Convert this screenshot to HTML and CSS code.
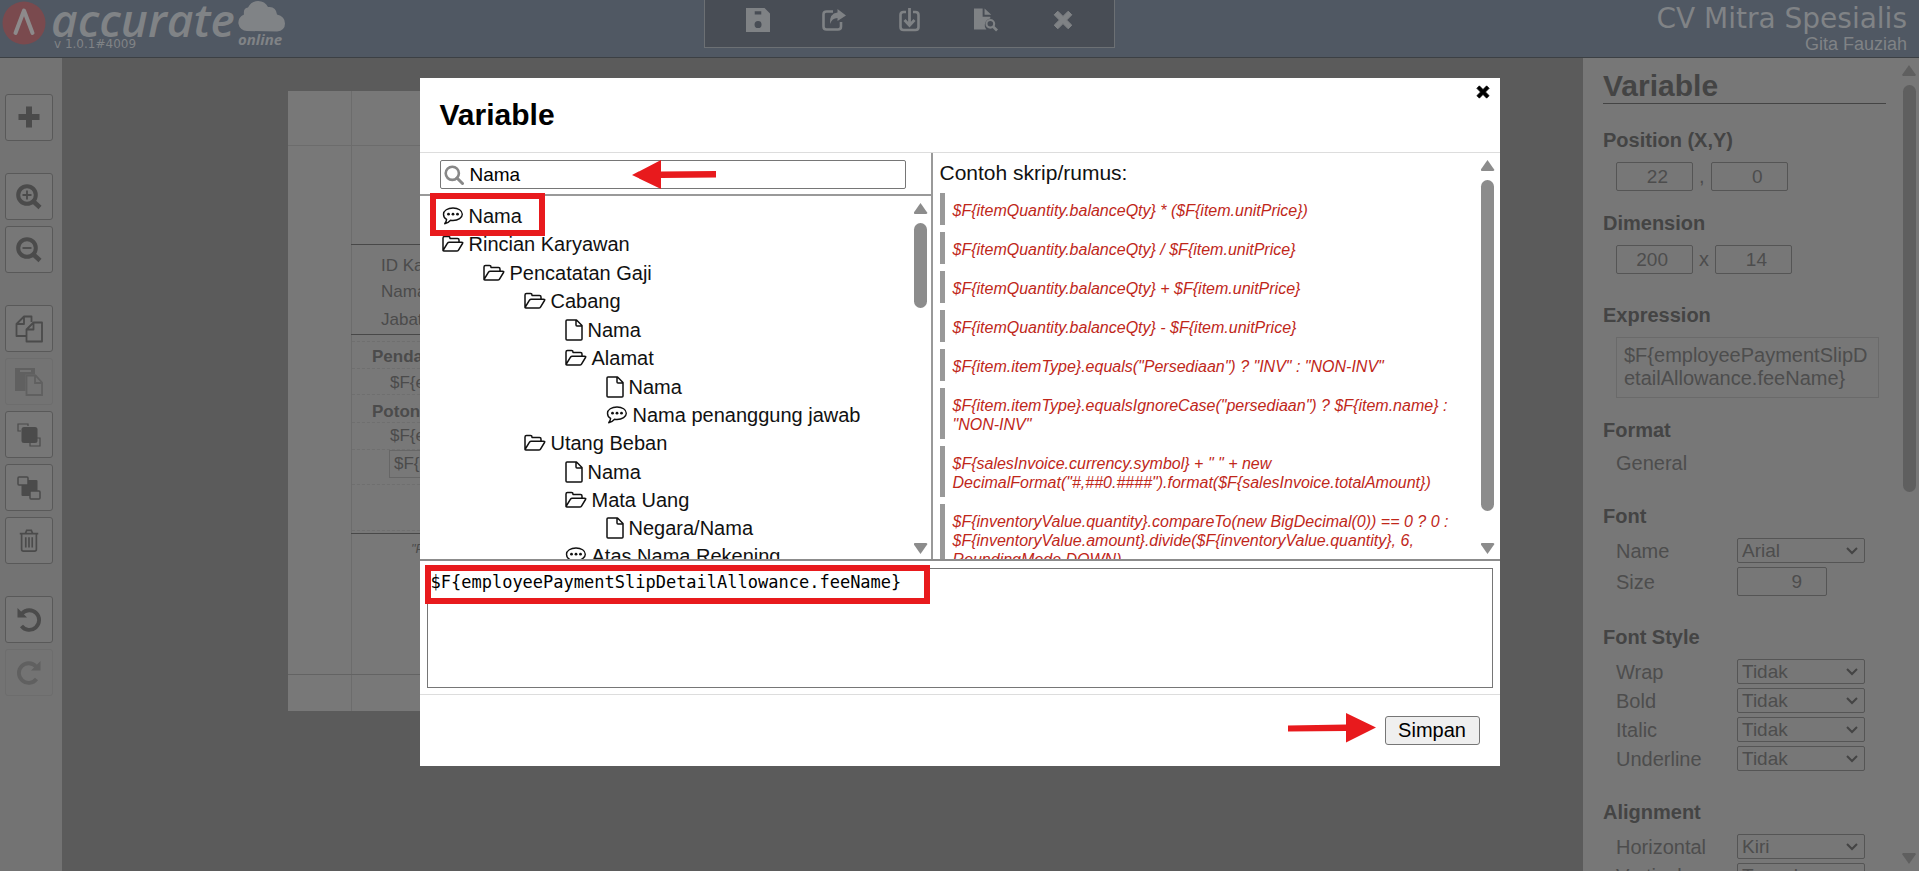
FILE: index.html
```html
<!DOCTYPE html>
<html lang="id">
<head>
<meta charset="utf-8">
<title>Accurate Online - Variable</title>
<link rel="stylesheet" href="styles.css">
</head>
<body>
<svg class="defs" aria-hidden="true">
  <symbol id="i-folder" viewBox="0 0 22 18"><path d="M1 15.500V3q0-1.500 1.500-1.500h4q1.500 0 1.500 1.500v.5h7.500q1.500 0 1.500 1.500v2M1 15.500L5.500 8.200q.6-1 1.800-1H19.500q1.800 0 1 1.300l-4 6.600q-.6 1-1.800 1H2.200q-1.200 0-1.200-.8z" fill="none" stroke="currentColor" stroke-width="1.500" stroke-linejoin="round"/></symbol>
  <symbol id="i-file" viewBox="0 0 18 22"><path d="M1 2q0-1 1-1h9.500L17 6.500V20q0 1-1 1H2q-1 0-1-1zM11 1v5q0 1 1 1h5" fill="none" stroke="currentColor" stroke-width="1.500" stroke-linejoin="round"/></symbol>
  <symbol id="i-chat" viewBox="0 0 22 18"><path d="M11 1c5.300 0 9.300 2.700 9.300 6.200s-4 6.300-9.300 6.300q-1.300 0-2.400-.2Q6 16.300 2.700 16.700q1.700-1.700 1.900-4.300C2.600 11.300 1.500 9.400 1.500 7.200 1.500 3.700 5.700 1 11 1z" fill="none" stroke="currentColor" stroke-width="1.400" stroke-linejoin="round"/><circle cx="6.500" cy="7.200" r="1.400" fill="currentColor"/><circle cx="11" cy="7.200" r="1.400" fill="currentColor"/><circle cx="15.500" cy="7.200" r="1.400" fill="currentColor"/></symbol>
  <symbol id="i-times" viewBox="0 0 20 20"><path d="M4.800 1.200L10 6.400l5.200-5.200 3.600 3.600L13.600 10l5.200 5.200-3.600 3.600L10 13.600l-5.200 5.200-3.600-3.600L6.400 10 1.200 4.800z" fill="currentColor" stroke="currentColor" stroke-linejoin="round"/></symbol>
</svg>

<div class="app">
  <header class="topbar">
    <div class="brand">
      <svg class="brand-mark" viewBox="0 0 44 44" aria-hidden="true"><circle cx="22" cy="22" r="21.500" fill="#7a4a4e"/><path d="M13.500 32L22 9.500 30.500 32" fill="none" stroke="#8d8a8b" stroke-width="4" stroke-linecap="round" stroke-linejoin="round"/></svg>
      <div class="brand-text"><span class="brand-name">accurate</span><span class="brand-version">v 1.0.1#4009</span></div>
      <div class="brand-side">
        <svg class="brand-cloud" viewBox="0 0 47 31" aria-hidden="true"><path d="M9 30a8.500 8.500 0 0 1-3-16.500Q5 7 10 6.500 13 0 20 0q7 0 10 6 8-1 9 7.500 8 2 8 9 0 7-8 8z" fill="#808386"/></svg>
        <span class="brand-online">online</span>
      </div>
    </div>
    <nav class="tools" aria-label="Berkas">
      <button class="tool" aria-label="Simpan"><svg viewBox="0 0 22 22"><path fill-rule="evenodd" d="M0 0h17l5 5v17H0zM8 3v3h6V3zM11 12a3.200 3.200 0 1 0 .1 6.400A3.200 3.200 0 0 0 11 12z" fill="currentColor"/></svg></button>
      <button class="tool" aria-label="Ekspor"><svg viewBox="0 0 24 22"><path d="M11 2.500H4.500q-3 0-3 3v12q0 3 3 3h11.500q3 0 3-3V13" fill="none" stroke="currentColor" stroke-width="2.600"/><path d="M15.500 0L24 6.500 15.500 12V9Q10 9 8 15 7 4.500 15.500 3.500z" fill="currentColor"/></svg></button>
      <button class="tool" aria-label="Impor"><svg viewBox="0 0 22 24"><path d="M7 4H4.500q-3 0-3 3v12q0 3 3 3h12q3 0 3-3V7q0-3-3-3H14" fill="none" stroke="currentColor" stroke-width="2.600"/><path d="M10.500 0v17M5.500 12l5 5.500 5-5.500" fill="none" stroke="currentColor" stroke-width="2.800"/></svg></button>
      <button class="tool" aria-label="Pratinjau"><svg viewBox="0 0 25 24"><path d="M0 0h9v8.500h8v2a7 7 0 0 0-4 11.500H0zM11 0l7 6.500h-7z" fill="currentColor"/><circle cx="17" cy="16" r="4" fill="none" stroke="currentColor" stroke-width="2.200"/><path d="M19.500 18.500l4.500 4.500" stroke="currentColor" stroke-width="2.800"/></svg></button>
      <button class="tool" aria-label="Tutup"><svg class="small" viewBox="0 0 20 20"><use href="#i-times"/></svg></button>
    </nav>
    <div class="account"><span class="company">CV Mitra Spesialis</span><span class="user">Gita Fauziah</span></div>
  </header>

  <div class="workspace">
    <aside class="sidebar">
      <div class="group">
        <button class="side-btn" aria-label="Tambah"><svg viewBox="0 0 24 24"><path d="M12 3.500v15M4.500 11h15" stroke="currentColor" stroke-width="6" stroke-linecap="square"/></svg></button>
      </div>
      <div class="group">
        <button class="side-btn" aria-label="Perbesar"><svg class="zoom" viewBox="0 0 26 26"><circle cx="11" cy="11" r="8.800" fill="none" stroke="currentColor" stroke-width="4"/><path d="M11 6.500v9M6.500 11h9" stroke="currentColor" stroke-width="1.800"/><path d="M17.500 17.500l6.500 6" stroke="currentColor" stroke-width="4.500"/></svg></button>
        <button class="side-btn" aria-label="Perkecil"><svg class="zoom" viewBox="0 0 26 26"><circle cx="11" cy="11" r="8.800" fill="none" stroke="currentColor" stroke-width="4"/><path d="M6.500 11h9" stroke="currentColor" stroke-width="1.800"/><path d="M17.500 17.500l6.500 6" stroke="currentColor" stroke-width="4.500"/></svg></button>
      </div>
      <div class="group">
        <button class="side-btn" aria-label="Salin"><svg class="wide" viewBox="0 0 28 28"><g fill="none" stroke="currentColor" stroke-width="1.800" stroke-linejoin="round"><path d="M11 21H1.500V9L9 1.500h7.500V7M9 1.500V9H1.500"/><path d="M11.500 14.500L18.500 7.500H27v19H11.500zM18.500 7.500v7h-7"/></g></svg></button>
        <button class="side-btn disabled" aria-label="Tempel" disabled><svg class="wide" viewBox="0 0 28 28"><path fill-rule="evenodd" d="M0 0h20v6.500h-9.500V23H0zM5 2v2h11V2z" fill="currentColor"/><path d="M11.500 7.500h9l6.500 7V27H11.500zM20 7.500V15h7" fill="#737373" stroke="currentColor" stroke-width="1.800"/></svg></button>
        <button class="side-btn" aria-label="Bawa ke depan"><svg viewBox="0 0 24 24"><rect x="4.500" y="4" width="16" height="16" rx="2.500" fill="currentColor"/><path d="M4 8H1V1h10v2M20 15h3v8H13v-3" fill="none" stroke="currentColor" stroke-width="1.200"/></svg></button>
        <button class="side-btn" aria-label="Kirim ke belakang"><svg viewBox="0 0 24 24"><rect x="4.500" y="4" width="16" height="16" rx="1" fill="currentColor"/><g fill="#777" stroke="currentColor" stroke-width="1.500"><rect x="1" y="1" width="10" height="8" rx="1"/><rect x="13" y="15" width="10" height="8" rx="1"/></g></svg></button>
        <button class="side-btn" aria-label="Hapus"><svg viewBox="0 0 24 26"><path d="M2 5h20M8 5l1.500-3.500h5L16 5M4 5v17q0 2 2 2h12q2 0 2-2V5M8.500 9v11M12 9v11M15.500 9v11" fill="none" stroke="currentColor" stroke-width="1.800"/></svg></button>
      </div>
      <div class="group">
        <button class="side-btn" aria-label="Urungkan"><svg viewBox="0 0 24 24"><path d="M5 5.500A9.800 9.800 0 1 1 4.500 18" fill="none" stroke="currentColor" stroke-width="3.800"/><path d="M.5 0v9.500h9.500z" fill="currentColor"/></svg></button>
        <button class="side-btn disabled" aria-label="Ulangi" disabled><svg viewBox="0 0 24 24"><path d="M19 5.500A9.800 9.800 0 1 0 19.500 18" fill="none" stroke="currentColor" stroke-width="3.800"/><path d="M23.500 0v9.500H14z" fill="currentColor"/></svg></button>
      </div>
    </aside>

    <main class="canvas">
      <div class="paper">
        <i class="rule margin-left"></i><i class="rule margin-top"></i><i class="rule margin-bottom"></i>
        <i class="line l1"></i><i class="line l2"></i><i class="line l3"></i>
        <i class="dash d1"></i><i class="dash d2"></i><i class="dash d3"></i><i class="dash d4"></i><i class="dash d5"></i><i class="dash d6"></i><i class="dash d7"></i>
        <span class="field f1">ID Karyawan</span>
        <span class="field f2">Nama</span>
        <span class="field f3">Jabatan</span>
        <b class="field f4">Pendapatan</b>
        <span class="field f5">$F{employee}</span>
        <b class="field f6">Potongan</b>
        <span class="field f7">$F{employee}</span>
        <span class="field f8">$F{employee}</span>
        <em class="field f9">"Payroll"</em>
      </div>
    </main>

    <aside class="panel">
      <div class="panel-body">
        <h2>Variable</h2>
        <section class="tight"><h3>Position (X,Y)</h3>
          <div class="pair"><input aria-label="X" value="22"><span>,</span><input aria-label="Y" value="0"></div></section>
        <section><h3>Dimension</h3>
          <div class="pair"><input aria-label="Lebar" value="200"><span>x</span><input aria-label="Tinggi" value="14"></div></section>
        <section class="tight"><h3>Expression</h3><div class="expression">$F{employeePaymentSlipDetailAllowance.feeName}</div></section>
        <section><h3>Format</h3><p class="value">General</p></section>
        <section><h3>Font</h3>
          <div class="prop"><label for="fn">Name</label><select id="fn"><option>Arial</option></select></div>
          <div class="prop"><label for="fs">Size</label><input id="fs" value="9"></div></section>
        <section><h3>Font Style</h3>
          <div class="prop"><label for="wr">Wrap</label><select id="wr"><option>Tidak</option></select></div>
          <div class="prop"><label for="bo">Bold</label><select id="bo"><option>Tidak</option></select></div>
          <div class="prop"><label for="it">Italic</label><select id="it"><option>Tidak</option></select></div>
          <div class="prop"><label for="un">Underline</label><select id="un"><option>Tidak</option></select></div></section>
        <section><h3>Alignment</h3>
          <div class="prop"><label for="ho">Horizontal</label><select id="ho"><option>Kiri</option></select></div>
          <div class="prop"><label for="ve">Vertical</label><select id="ve"><option>Tengah</option></select></div></section>
      </div>
      <div class="scrollbar dim"><i class="up"></i><div class="track"><i class="thumb"></i></div><i class="down"></i></div>
    </aside>
  </div>
</div>

<div class="overlay">
  <div class="modal" role="dialog" aria-labelledby="dlg-title">
    <div class="modal-head"><h1 id="dlg-title">Variable</h1>
      <button class="close" aria-label="Tutup"><svg viewBox="0 0 20 20"><use href="#i-times"/></svg></button></div>
    <div class="modal-main">
      <div class="picker">
        <div class="search-row"><label class="search">
          <svg viewBox="0 0 20 20" aria-hidden="true"><circle cx="8.300" cy="8.300" r="6.600" fill="none" stroke="#888" stroke-width="2.600"/><path d="M13 13l5.500 5.500" stroke="#888" stroke-width="3" stroke-linecap="round"/></svg>
          <input type="text" value="Nama" aria-label="Cari"></label></div>
        <div class="tree-pane">
          <ul class="tree">
            <li><div class="node"><svg class="ic"><use href="#i-chat"/></svg>Nama</div></li>
            <li><div class="node"><svg class="ic"><use href="#i-folder"/></svg>Rincian Karyawan</div>
              <ul class="leaf">
                <li><div class="node"><svg class="ic"><use href="#i-folder"/></svg>Pencatatan Gaji</div>
                  <ul>
                    <li><div class="node"><svg class="ic"><use href="#i-folder"/></svg>Cabang</div>
                      <ul class="leaf">
                        <li><div class="node"><svg class="ic file"><use href="#i-file"/></svg>Nama</div></li>
                        <li><div class="node"><svg class="ic"><use href="#i-folder"/></svg>Alamat</div>
                          <ul class="leaf">
                            <li><div class="node"><svg class="ic file"><use href="#i-file"/></svg>Nama</div></li>
                            <li><div class="node"><svg class="ic"><use href="#i-chat"/></svg>Nama penanggung jawab</div></li>
                          </ul></li>
                      </ul></li>
                    <li><div class="node"><svg class="ic"><use href="#i-folder"/></svg>Utang Beban</div>
                      <ul class="leaf">
                        <li><div class="node"><svg class="ic file"><use href="#i-file"/></svg>Nama</div></li>
                        <li><div class="node"><svg class="ic"><use href="#i-folder"/></svg>Mata Uang</div>
                          <ul>
                            <li><div class="node"><svg class="ic file"><use href="#i-file"/></svg>Negara/Nama</div></li>
                          </ul></li>
                        <li><div class="node"><svg class="ic"><use href="#i-chat"/></svg>Atas Nama Rekening</div></li>
                      </ul></li>
                  </ul></li>
              </ul></li>
          </ul>
          <div class="scrollbar tree-bar"><i class="up"></i><div class="track"><i class="thumb"></i></div><i class="down"></i></div>
        </div>
      </div>
      <div class="samples">
        <div class="samples-body">
          <p class="samples-title">Contoh skrip/rumus:</p>
          <blockquote>$F{itemQuantity.balanceQty} * ($F{item.unitPrice})</blockquote>
          <blockquote>$F{itemQuantity.balanceQty} / $F{item.unitPrice}</blockquote>
          <blockquote>$F{itemQuantity.balanceQty} + $F{item.unitPrice}</blockquote>
          <blockquote>$F{itemQuantity.balanceQty} - $F{item.unitPrice}</blockquote>
          <blockquote>$F{item.itemType}.equals("Persediaan") ? "INV" : "NON-INV"</blockquote>
          <blockquote>$F{item.itemType}.equalsIgnoreCase("persediaan") ? $F{item.name} : "NON-INV"</blockquote>
          <blockquote>$F{salesInvoice.currency.symbol} + " " + new DecimalFormat("#,##0.####").format($F{salesInvoice.totalAmount})</blockquote>
          <blockquote>$F{inventoryValue.quantity}.compareTo(new BigDecimal(0)) == 0 ? 0 : $F{inventoryValue.amount}.divide($F{inventoryValue.quantity}, 6, RoundingMode.DOWN)</blockquote>
        </div>
        <div class="scrollbar sample-bar"><i class="up"></i><div class="track"><i class="thumb"></i></div><i class="down"></i></div>
      </div>
    </div>
    <div class="editor"><textarea aria-label="Ekspresi" spellcheck="false">$F{employeePaymentSlipDetailAllowance.feeName}</textarea></div>
    <div class="modal-foot"><button class="save">Simpan</button></div>

    <i class="mark mark-node"></i>
    <i class="mark mark-expr"></i>
    <svg class="arrow arrow-search" viewBox="0 0 84 30" aria-hidden="true"><path d="M0 15L29 0V11.500L84 11v6.500L29 18V29z" fill="#e81a1d"/></svg>
    <svg class="arrow arrow-save" viewBox="0 0 88 30" aria-hidden="true"><path d="M88 14.500L58 0V11.500L0 12.500v6L58 18V29.500z" fill="#e81a1d"/></svg>
  </div>
</div>
</body>
</html>
```
FILE: styles.css
```css
* { box-sizing: border-box; }
body { margin: 0; font-family: "Liberation Sans", Arial, sans-serif; font-size: 20px; color: #111; overflow: hidden; }
h1, h2, h3, p, ul, blockquote { margin: 0; padding: 0; }
button, input, select, textarea { font-family: inherit; margin: 0; }
i { display: block; }
svg { display: block; }
.defs { position: absolute; width: 0; height: 0; }

.app { display: flex; flex-direction: column; height: 100vh; }

/* Top bar */
.topbar { display: grid; grid-template-columns: 7fr 411px 8fr; flex: 0 0 58px; background: #505863; border-bottom: 1px solid #3c4044; }
.brand { display: flex; padding: 1px 0 0 2px; color: #808386; }
.brand-mark { width: 44px; height: 44px; }
.brand-text { display: flex; flex-direction: column; padding-left: 5px; width: 192px; }
.brand-name { font: italic 600 46px/36px "Open Sans", sans-serif; }
.brand-version { font: 12px/14px "DejaVu Sans", sans-serif; padding-left: 3px; }
.brand-cloud { width: 47px; height: 31px; }
.brand-side { width: 50px; }
.brand-online { display: block; font: italic 700 15px/14px "Open Sans", sans-serif; }
.tools { display: flex; justify-content: space-around; padding: 0 13px 0 15px; height: 48px; background: #484d55; border: 1px solid #6c7074; border-top: 0; }
.tool { display: flex; align-items: center; justify-content: center; width: 50px; height: 40px; padding: 0; border: 0; background: none; color: #7f8285; }
.tool svg { width: 24px; height: 24px; }
.tool svg.small { width: 20px; height: 20px; }
.account { display: flex; flex-direction: column; align-items: flex-end; padding: 2px 12px 0 0; color: #808386; }
.company { font: 28px/34px "DejaVu Sans", sans-serif; }
.user { font-size: 18px; line-height: 16px; }

.workspace { display: flex; flex: 1; min-height: 0; }

/* Left tools */
.sidebar { flex: 0 0 62px; display: flex; flex-direction: column; gap: 32px; padding: 36px 0 0 5px; background: #737373; }
.group { display: flex; flex-direction: column; gap: 6px; }
.side-btn { display: flex; align-items: center; justify-content: center; width: 48px; height: 47px; padding: 0; background: #777; border: 1px solid #595959; border-radius: 3px; color: #4b4b4b; }
.side-btn svg { width: 24px; height: 24px; }
.side-btn svg.zoom { width: 26px; height: 26px; }
.side-btn svg.wide { width: 28px; height: 28px; }
.side-btn.disabled { background: #737373; border-color: #6d6d6d; color: #606060; }

/* Design canvas */
.canvas { flex: 1; min-width: 0; background: #5b5b5b; padding: 33px 226px 0; }
.paper { position: relative; height: 620px; background: #787878; color: #4b4b4b; }
.rule, .line, .dash { position: absolute; }
.rule { background: #6c6c6c; }
.margin-left { left: 63px; top: 0; bottom: 0; width: 1px; }
.margin-top { left: 0; right: 0; top: 54px; height: 1px; }
.margin-bottom { left: 0; right: 0; top: 583px; height: 1px; background: #636363; }
.line { left: 63px; right: 63px; height: 1px; background: #484848; }
.l1 { top: 153px; }
.l2 { top: 243px; }
.l3 { top: 442px; }
.dash { left: 64px; right: 63px; border-top: 1px dashed #6f6f6f; }
.d1 { top: 250px; }
.d2 { top: 277px; }
.d3 { top: 303px; }
.d4 { top: 331px; }
.d5 { top: 358px; }
.d6 { top: 393px; }
.d7 { top: 439px; }
.field { position: absolute; font-size: 17px; line-height: 26px; white-space: nowrap; }
.f1 { left: 93px; top: 162px; }
.f2 { left: 93px; top: 188px; }
.f3 { left: 93px; top: 216px; }
.f4 { left: 84px; top: 253px; }
.f5 { left: 102px; top: 279px; }
.f6 { left: 84px; top: 308px; }
.f7 { left: 102px; top: 332px; }
.f8 { left: 101px; top: 359px; padding: 0 4px; border: 1px solid #666; }
.f9 { left: 123px; top: 445px; font-size: 13px; }

/* Property panel */
.panel { flex: 0 0 336px; display: flex; background: #777; color: #4d4d4d; overflow: hidden; }
.panel-body { flex: 1; padding: 10px 13px 0 20px; overflow: hidden; }
.panel h2 { font-size: 30px; line-height: 35px; border-bottom: 1px solid #444; margin-bottom: 24px; color: #444; }
.panel h3 { font-size: 20px; line-height: 24px; margin-bottom: 10px; color: #444; }
.panel section { margin-bottom: 29px; padding-left: 13px; }
.panel section.tight { margin-bottom: 20px; }
.panel section h3 { margin-left: -13px; }
.pair { display: flex; gap: 6px; align-items: center; }
.panel input, .panel select { background: #777; border: 1px solid #555; border-radius: 2px; color: #4d4d4d; font-size: 19px; }
.panel input { width: 77px; height: 29px; padding: 0 24px 0 0; text-align: right; }
.expression { width: 263px; height: 61px; padding: 6px 7px; border: 1px solid #6a6a6a; line-height: 23px; overflow-wrap: anywhere; }
.value { line-height: 23px; }
.prop { display: grid; grid-template-columns: 121px 1fr; align-items: center; margin-bottom: 4px; }
.prop:last-child { margin-bottom: 0; }
.prop label { line-height: 24px; }
.panel .prop input { width: 90px; }
.panel .prop select { appearance: none; width: 128px; height: 25px; padding: 0 4px; background: #777 url("data:image/svg+xml,%3Csvg xmlns='http://www.w3.org/2000/svg' width='12' height='8'%3E%3Cpath d='M1 1l5 5 5-5' fill='none' stroke='%23444' stroke-width='2'/%3E%3C/svg%3E") no-repeat right 6px center; }

/* Scroll bars */
.scrollbar { display: flex; flex-direction: column; align-items: center; flex: 0 0 20px; color: #8c8c8c; }
.scrollbar .track { flex: 1; padding: 9px 0; }
.up, .down { width: 14px; height: 11px; background: currentColor; }
.up { clip-path: polygon(50% 0, 100% 90%, 92% 100%, 8% 100%, 0 90%); }
.down { clip-path: polygon(8% 0, 92% 0, 100% 10%, 50% 100%, 0 10%); }
.thumb { width: 13px; background: currentColor; border-radius: 7px; }
.dim { color: #5f5f5f; padding: 7px 0; }
.dim .thumb { height: 407px; }
.tree-bar { padding: 7px 0 5px; }
.tree-bar .thumb { height: 85px; }
.sample-bar { padding: 7px 0 5px; }
.sample-bar .thumb { height: 331px; }

/* Dialog */
.overlay { position: fixed; inset: 0; display: flex; justify-content: center; align-items: flex-start; padding-top: 78px; }
.modal { position: relative; width: 1080px; background: #fff; }
.modal-head { display: flex; justify-content: space-between; height: 75px; padding: 7px 10px 0 20px; border-bottom: 1px solid #ddd; }
.modal-head h1 { font-size: 30px; line-height: 60px; color: #000; }
.close { width: 14px; height: 14px; padding: 0; border: 0; background: none; color: #000; }
.close svg { width: 14px; height: 14px; }
.modal-main { display: flex; height: 408px; border-bottom: 2px solid #8c8c8c; }
.picker { flex: 0 0 513px; display: flex; flex-direction: column; border-right: 2px solid #999; }
.search-row { padding: 7px 25px 5px 20px; border-bottom: 2px solid #999; }
.search { display: flex; align-items: center; gap: 6px; height: 29px; padding-left: 3px; border: 1px solid #767676; border-radius: 2px; }
.search svg { width: 20px; height: 20px; }
.search input { flex: 1; min-width: 0; border: 0; padding: 0; outline: 0; font-size: 19px; color: #000; background: none; }
.tree-pane { flex: 1; min-height: 0; display: flex; overflow: hidden; }
.tree { flex: 1; padding: 6px 0 0 22px; list-style: none; overflow: hidden; }
.tree ul { list-style: none; padding-left: 41px; }
.tree .leaf { padding-top: 1px; }
.node { display: flex; align-items: center; gap: 5px; height: 28px; white-space: nowrap; }
.ic { width: 22px; height: 18px; }
.ic.file { width: 18px; height: 22px; }
.samples { flex: 1; min-width: 0; display: flex; overflow: hidden; }
.samples-body { flex: 1; padding: 7px 16px 0 7px; overflow: hidden; }
.samples-title { font-size: 21px; line-height: 26px; margin-bottom: 7px; }
.samples blockquote { margin-bottom: 7px; padding: 8px 0 5px 8px; border-left: 5px solid #999; font-size: 16px; font-style: italic; line-height: 19px; color: #c0271a; }
.sample-bar { flex-basis: 24px; }
.editor { padding: 7px 7px 6px; border-bottom: 1px solid #ddd; }
.editor textarea { display: block; width: 100%; height: 120px; padding: 2px 3px; border: 1px solid #767676; border-radius: 0; resize: none; outline: 0; font: 17px/22px "DejaVu Sans Mono", monospace; color: #000; }
.modal-foot { display: flex; justify-content: flex-end; padding: 21px 20px; }
.save { width: 95px; height: 29px; padding: 0; border: 1px solid #767676; border-radius: 3px; background: #efefef; font-size: 20px; color: #000; }

/* Callouts */
.mark { position: absolute; border: 6px solid #e81a1d; }
.mark-node { left: 10px; top: 115px; width: 115px; height: 43px; }
.mark-expr { left: 5px; top: 487px; width: 505px; height: 39px; }
.arrow { position: absolute; }
.arrow-search { left: 212px; top: 82px; width: 84px; height: 30px; }
.arrow-save { left: 868px; top: 635px; width: 88px; height: 30px; }
```
